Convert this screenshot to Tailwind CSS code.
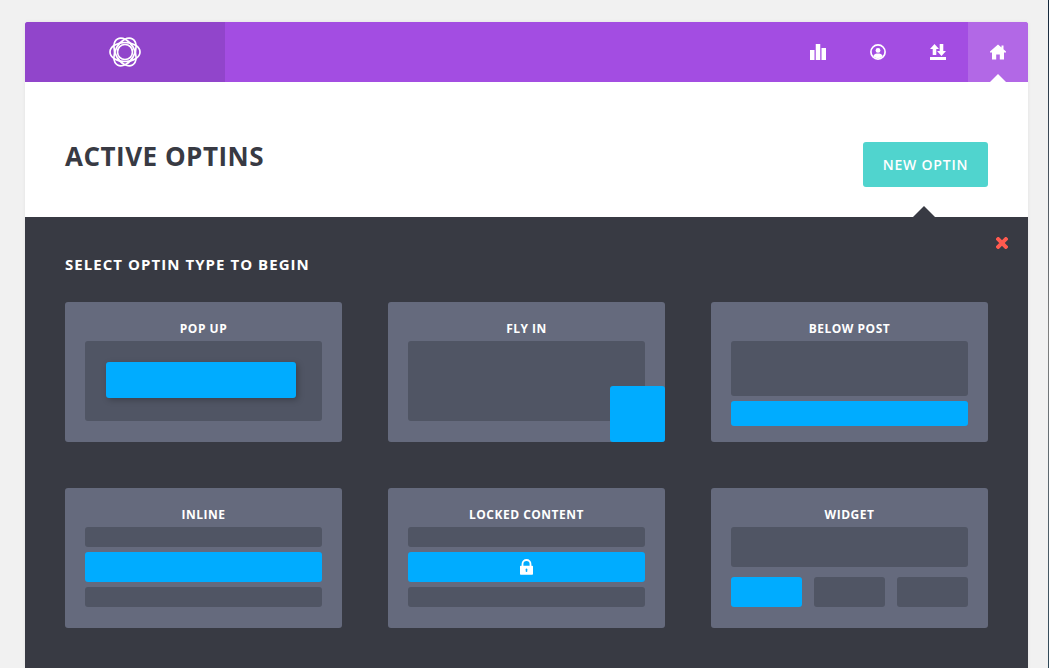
<!doctype html>
<html>
<head>
<meta charset="utf-8">
<script src="https://cdn.jsdelivr.net/npm/@tailwindcss/browser@4"></script>
</head>
<body class="relative bg-[#f1f1f1] font-['Open_Sans',sans-serif] overflow-hidden">
<div class="absolute right-0 top-0 w-px h-[668px] bg-linear-to-b from-[#12263a] via-[#7f8080] to-[#2f4858]"></div>
<div class="h-[668px] pl-[25px] pr-[21px] pt-[22px] overflow-hidden">
  <div class="w-[1003px] bg-white rounded-t-[3px] overflow-hidden shadow-[0_0_4px_rgba(0,0,0,0.06)]">
    <header class="flex h-[60px] bg-[#a34de2]">
      <div class="w-[200px] bg-[#9145cb] flex items-center justify-center">
        <svg width="34" height="32" viewBox="0 0 34 32" fill="none" stroke="white" stroke-width="1.700">
          <ellipse cx="17" cy="16" rx="15" ry="9.500"/>
          <ellipse cx="17" cy="16" rx="15" ry="9.500" transform="rotate(60 17 16)"/>
          <ellipse cx="17" cy="16" rx="15" ry="9.500" transform="rotate(120 17 16)"/>
          <circle cx="17" cy="16" r="7.500"/>
        </svg>
      </div>
      <nav class="flex-1 flex justify-end">
        <a class="w-[60px] flex items-center justify-center">
          <svg width="16" height="16" viewBox="0 0 16 16" fill="white"><rect x="0" y="6" width="4.500" height="10"/><rect x="5.750" y="0" width="4.500" height="16"/><rect x="11.500" y="4" width="4.500" height="12"/></svg>
        </a>
        <a class="w-[60px] flex items-center justify-center">
          <svg width="16" height="16" viewBox="0 0 16 16"><circle cx="8" cy="8" r="7.100" fill="none" stroke="white" stroke-width="1.700"/><circle cx="8" cy="6.400" r="2.400" fill="white"/><path d="M3.200 12.200C4.200 10 6 9.600 8 9.600s3.800.4 4.800 2.600A6.500 6.500 0 0 1 3.200 12.200z" fill="white"/></svg>
        </a>
        <a class="w-[60px] flex items-center justify-center">
          <svg width="16" height="16" viewBox="0 0 16 16" fill="white"><path d="M4.500 0L9 5H6.300v6H2.700V5H0zM11.500 12L7 7h2.700V0h3.600v7H16z"/><rect x="0" y="13" width="16" height="3"/></svg>
        </a>
        <a class="relative w-[60px] bg-[#b268e6] flex items-center justify-center">
          <svg width="16" height="16" viewBox="0 0 16 16" fill="white"><path d="M8 0.500L11.500 3.500V1.500h2v3.700L16 7.500v1H14V15.500H9.800V10.500H6.200v5H2V8.500H0v-1z"/></svg>
          <span class="absolute bottom-0 left-[22px] w-0 h-0 border-x-[8px] border-x-transparent border-b-[8px] border-b-white"></span>
        </a>
      </nav>
    </header>
    <section class="relative h-[135px] px-10 pt-[60px] flex justify-between items-start">
      <h1 class="text-[26px] leading-[30px] font-bold tracking-[0.5px] text-[#383a43] -mt-[1px]">ACTIVE OPTINS</h1>
      <button class="w-[125px] h-[45px] bg-[#50d4ce] rounded-[3px] text-white text-[14px] font-semibold tracking-[0.8px]">NEW OPTIN</button>
      <span class="absolute right-[93px] bottom-0 w-0 h-0 border-x-[11px] border-x-transparent border-b-[11px] border-b-[#383a43]"></span>
    </section>
    <section class="relative h-[451px] bg-[#383a43] px-10 pt-10">
      <svg class="absolute top-[20px] right-[20px]" width="12" height="12" viewBox="0 0 12 12" stroke="#ff5a4f" stroke-width="4" stroke-linecap="square"><path d="M2.200 2.200l7.600 7.600M9.800 2.200l-7.600 7.600"/></svg>
      <h2 class="text-[15px] leading-4 font-bold tracking-[1.05px] text-white -mt-px">SELECT OPTIN TYPE TO BEGIN</h2>
      <div class="grid grid-cols-3 gap-[46px] mt-[30px]">
        <div class="h-[140px] bg-[#656a7d] rounded-[3px] px-5 pt-[19px]">
          <h3 class="text-center text-[12px] leading-4 font-bold tracking-[0.5px] text-white mb-[4px]">POP UP</h3>
          <div class="h-[80px] bg-[#505564] rounded-[3px] p-[21px]"><div class="w-[190px] h-[36px] bg-[#00acff] rounded-[3px] shadow-[2px_2px_6px_rgba(0,0,0,0.25)]"></div></div>
        </div>
        <div class="relative h-[140px] bg-[#656a7d] rounded-[3px] px-5 pt-[19px]">
          <h3 class="text-center text-[12px] leading-4 font-bold tracking-[0.5px] text-white mb-[4px]">FLY IN</h3>
          <div class="h-[80px] bg-[#505564] rounded-[3px]"></div>
          <div class="absolute right-0 bottom-0 w-[55px] h-[56px] bg-[#00acff] rounded-[3px]"></div>
        </div>
        <div class="h-[140px] bg-[#656a7d] rounded-[3px] px-5 pt-[19px]">
          <h3 class="text-center text-[12px] leading-4 font-bold tracking-[0.5px] text-white mb-[4px]">BELOW POST</h3>
          <div class="h-[55px] bg-[#505564] rounded-[3px]"></div>
          <div class="h-[25px] mt-[5px] bg-[#00acff] rounded-[3px]"></div>
        </div>
        <div class="h-[140px] bg-[#656a7d] rounded-[3px] px-5 pt-[19px]">
          <h3 class="text-center text-[12px] leading-4 font-bold tracking-[0.5px] text-white mb-[4px]">INLINE</h3>
          <div class="flex flex-col gap-[5px]">
            <div class="h-[20px] bg-[#505564] rounded-[3px]"></div>
            <div class="h-[30px] bg-[#00acff] rounded-[3px]"></div>
            <div class="h-[20px] bg-[#505564] rounded-[3px]"></div>
          </div>
        </div>
        <div class="h-[140px] bg-[#656a7d] rounded-[3px] px-5 pt-[19px]">
          <h3 class="text-center text-[12px] leading-4 font-bold tracking-[0.5px] text-white mb-[4px]">LOCKED CONTENT</h3>
          <div class="flex flex-col gap-[5px]">
            <div class="h-[20px] bg-[#505564] rounded-[3px]"></div>
            <div class="h-[30px] bg-[#00acff] rounded-[3px] flex items-center justify-center">
              <svg width="15" height="16" viewBox="0 0 15 16"><path d="M3.500 7V5a4 4 0 0 1 8 0v2" fill="none" stroke="white" stroke-width="1.800"/><path d="M1 7.500A.8.8 0 0 1 1.800 6.700h11.400a.8.8 0 0 1 .8.8V15a.8.8 0 0 1-.8.8H1.800A.8.8 0 0 1 1 15z" fill="white"/><rect x="6.700" y="9.500" width="1.600" height="3.500" rx=".8" fill="#00acff"/></svg>
            </div>
            <div class="h-[20px] bg-[#505564] rounded-[3px]"></div>
          </div>
        </div>
        <div class="h-[140px] bg-[#656a7d] rounded-[3px] px-5 pt-[19px]">
          <h3 class="text-center text-[12px] leading-4 font-bold tracking-[0.5px] text-white mb-[4px]">WIDGET</h3>
          <div class="h-[40px] bg-[#505564] rounded-[3px]"></div>
          <div class="flex justify-between mt-[10px]">
            <div class="w-[71px] h-[30px] bg-[#00acff] rounded-[3px]"></div>
            <div class="w-[71px] h-[30px] bg-[#505564] rounded-[3px]"></div>
            <div class="w-[71px] h-[30px] bg-[#505564] rounded-[3px]"></div>
          </div>
        </div>
      </div>
    </section>
  </div>
</div>
</body>
</html>
